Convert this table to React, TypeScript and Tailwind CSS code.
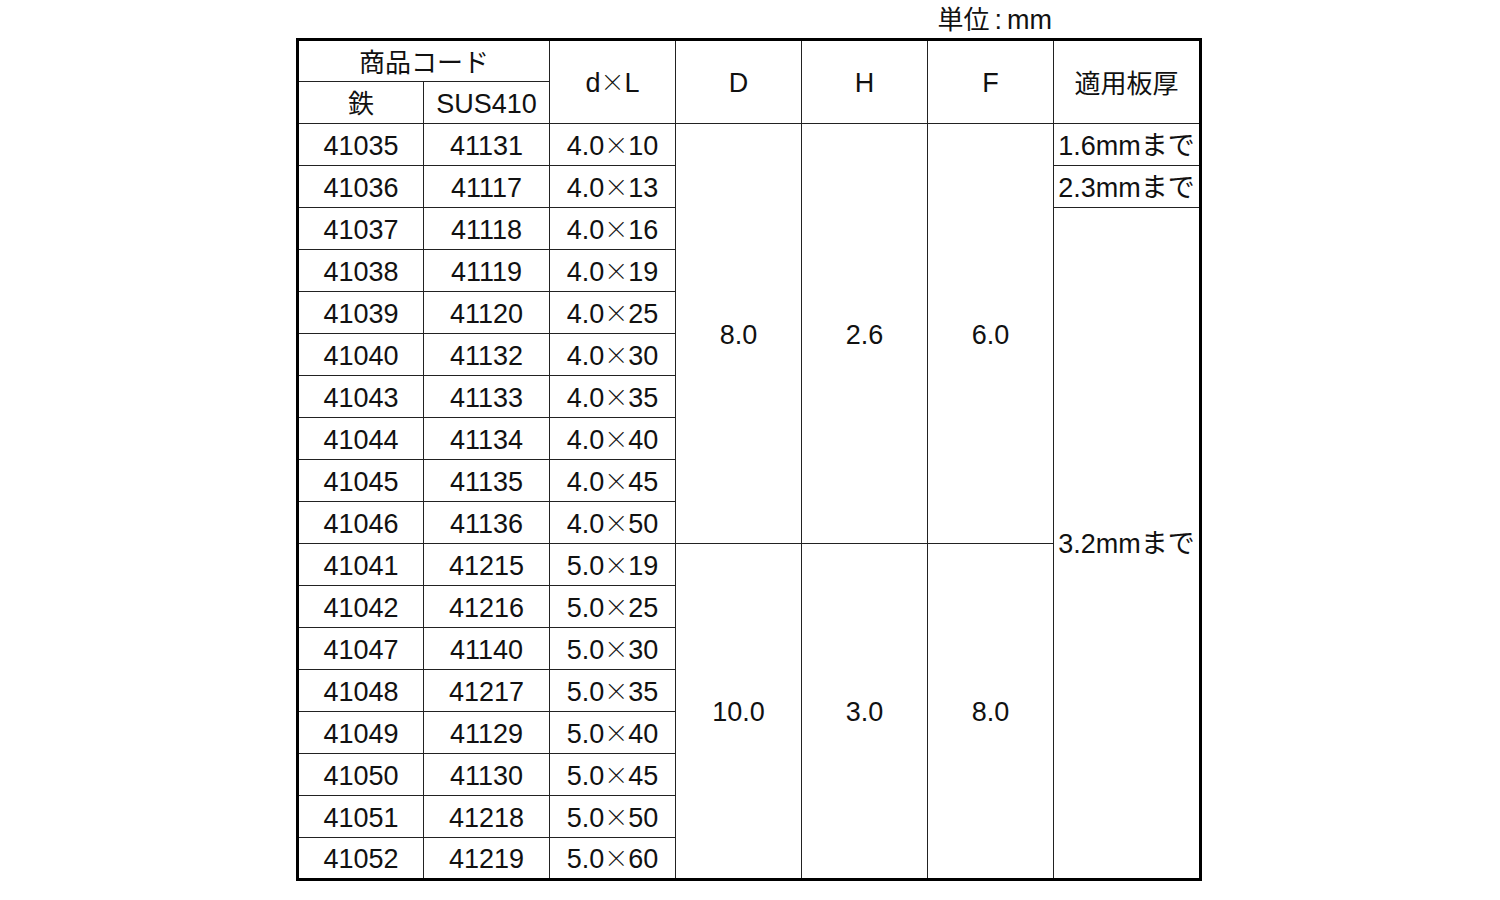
import React from "react";

const rows: [string, string, string][] = [
  ["41035", "41131", "4.0×10"],
  ["41036", "41117", "4.0×13"],
  ["41037", "41118", "4.0×16"],
  ["41038", "41119", "4.0×19"],
  ["41039", "41120", "4.0×25"],
  ["41040", "41132", "4.0×30"],
  ["41043", "41133", "4.0×35"],
  ["41044", "41134", "4.0×40"],
  ["41045", "41135", "4.0×45"],
  ["41046", "41136", "4.0×50"],
  ["41041", "41215", "5.0×19"],
  ["41042", "41216", "5.0×25"],
  ["41047", "41140", "5.0×30"],
  ["41048", "41217", "5.0×35"],
  ["41049", "41129", "5.0×40"],
  ["41050", "41130", "5.0×45"],
  ["41051", "41218", "5.0×50"],
  ["41052", "41219", "5.0×60"],
];

const cell = "border border-[#222] text-center align-middle p-0 pt-[3px] leading-none";

function Dim({ v }: { v: string }) {
  const [a, b] = v.split("×");
  return (
    <>
      {a}
      <span
        className="inline-block w-[24px] text-center text-[24px] font-light leading-[20px] align-[1px]"
        style={{ fontFamily: '"Noto Sans CJK JP", sans-serif' }}
      >
        ×
      </span>
      {b}
    </>
  );
}

export default function App() {
  return (
    <div
      className="w-[1500px] h-[900px] bg-white text-[#111] text-[27px]"
      style={{ fontFamily: '"Liberation Sans", "Noto Sans CJK JP", sans-serif' }}
    >
      <div className="flex h-[38px] items-center justify-end pr-[448px] pt-[2px]">
        <span className="leading-none">
          <span className="text-[26px]">単位</span>
          <span className="mx-[5px]">:</span>mm
        </span>
      </div>
      <div className="pl-[296px]">
        <table className="border-collapse table-fixed w-[906px] border-[3px] border-black">
          <colgroup>
            <col className="w-[126px]" />
            <col className="w-[126px]" />
            <col className="w-[126px]" />
            <col className="w-[126px]" />
            <col className="w-[126px]" />
            <col className="w-[126px]" />
            <col className="w-[147px]" />
          </colgroup>
          <tbody>
            <tr className="h-[42px]">
              <td colSpan={2} className={cell + " text-[26px]"}>商品コード</td>
              <td rowSpan={2} className={cell}>
                <Dim v="d×L" />
              </td>
              <td rowSpan={2} className={cell}>D</td>
              <td rowSpan={2} className={cell}>H</td>
              <td rowSpan={2} className={cell}>F</td>
              <td rowSpan={2} className={cell + " text-[26px]"}>適用板厚</td>
            </tr>
            <tr className="h-[42px]">
              <td className={cell + " text-[26px]"}>鉄</td>
              <td className={cell}>SUS410</td>
            </tr>
            {rows.map((r, i) => (
              <tr key={i} className="h-[42px]">
                <td className={cell}>{r[0]}</td>
                <td className={cell}>{r[1]}</td>
                <td className={cell}>
                  <Dim v={r[2]} />
                </td>
                {i === 0 && (
                  <>
                    <td rowSpan={10} className={cell}>8.0</td>
                    <td rowSpan={10} className={cell}>2.6</td>
                    <td rowSpan={10} className={cell}>6.0</td>
                  </>
                )}
                {i === 10 && (
                  <>
                    <td rowSpan={8} className={cell}>10.0</td>
                    <td rowSpan={8} className={cell}>3.0</td>
                    <td rowSpan={8} className={cell}>8.0</td>
                  </>
                )}
                {i === 0 && <td className={cell + " whitespace-nowrap"}>1.6mmまで</td>}
                {i === 1 && <td className={cell + " whitespace-nowrap"}>2.3mmまで</td>}
                {i === 2 && (
                  <td rowSpan={16} className={cell + " whitespace-nowrap"}>3.2mmまで</td>
                )}
              </tr>
            ))}
          </tbody>
        </table>
      </div>
    </div>
  );
}
